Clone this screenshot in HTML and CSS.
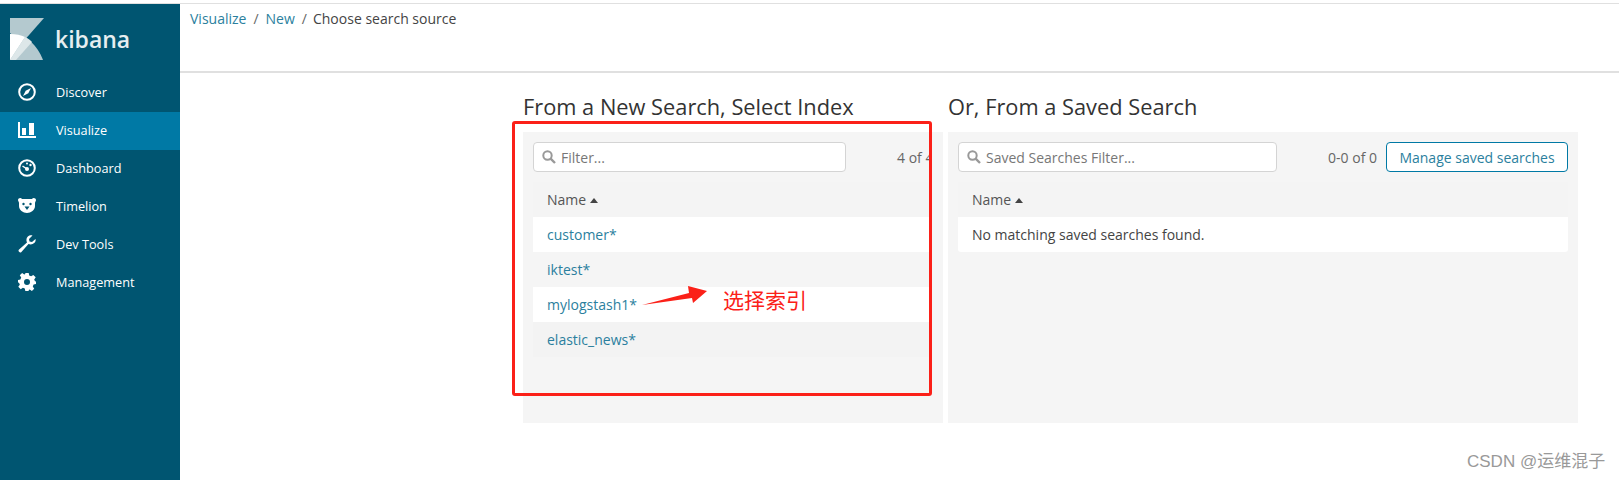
FILE: index.html
```html
<!DOCTYPE html>
<html>
<head>
    <title>Visualize - Kibana</title>
    <meta charset="utf-8">
    <link rel="stylesheet" href="styles.css">
</head>
<body>
    <div class="app">
        <nav class="sidebar">
            <div class="logo">
                <svg class="logo-mark" viewBox="0 0 34 42" width="34" height="42">
                    <polygon points="0,0 34,0 12,25 0,15" fill="#b4c9cf"/>
                    <path d="M0 16 C14 15 27 26 33 42 L0 42 Z" fill="#b4c9cf"/>
                    <path d="M0 16 C6 16 11 17 15 19 L0 42 Z" fill="#fff"/>
                    <path d="M15 19 C18 20 20 22 22 24 L6 42 L0 42 Z" fill="#dde7e9"/>
                </svg>
                <span class="logo-text">kibana</span>
            </div>
            <a class="nav-item" href="#">
                <svg class="nav-icon" viewBox="0 0 18 18"><circle cx="9" cy="9" r="7.8" fill="none" stroke="#fff" stroke-width="2"/><path d="M13 5 L10.3 10.3 L5 13 L7.7 7.7 Z" fill="#fff"/></svg>
                <span>Discover</span>
            </a>
            <a class="nav-item active" href="#">
                <svg class="nav-icon" viewBox="0 0 18 18"><path d="M0 1 H2 V15 H18 V17 H0 Z" fill="#fff"/><rect x="4" y="7" width="4" height="7" fill="#fff"/><rect x="11" y="2" width="5" height="12" fill="#fff"/></svg>
                <span>Visualize</span>
            </a>
            <a class="nav-item" href="#">
                <svg class="nav-icon" viewBox="0 0 18 18"><circle cx="9" cy="9" r="7.8" fill="none" stroke="#fff" stroke-width="2"/><circle cx="9" cy="10" r="2" fill="#fff"/><path d="M9 10 L4.5 7" stroke="#fff" stroke-width="1.5"/><circle cx="12.5" cy="6" r="1.2" fill="#fff"/><circle cx="9" cy="4.5" r="1" fill="#fff"/></svg>
                <span>Dashboard</span>
            </a>
            <a class="nav-item" href="#">
                <svg class="nav-icon" viewBox="0 0 18 18"><path d="M0 3 C0 1 3 0 4 2 H14 C15 0 18 1 18 3 C18 4 17 5 17 6 V9 C17 13 13 16 9 16 C5 16 1 13 1 9 V6 C1 5 0 4 0 3 Z" fill="#fff"/><circle cx="5.5" cy="7" r="1.2" fill="#005571"/><circle cx="12.5" cy="7" r="1.2" fill="#005571"/><path d="M6.5 9.5 H11.5 L9 13 Z" fill="#005571"/></svg>
                <span>Timelion</span>
            </a>
            <a class="nav-item" href="#">
                <svg class="nav-icon" viewBox="0 0 18 18"><path d="M17.5 4 L14 7 L11.5 6.5 L11 4 L14.5 0.6 C11.5 -0.4 8 2 8.5 6 L9 7.5 L0.8 14.8 C-0.3 16 1.8 18.2 3.2 17.2 L10.5 9 C14.5 10.5 18.5 7.5 17.5 4 Z" fill="#fff"/></svg>
                <span>Dev Tools</span>
            </a>
            <a class="nav-item" href="#">
                <svg class="nav-icon" viewBox="0 0 18 18"><path fill-rule="evenodd" d="M7.3 0 H10.7 L11.2 2.5 L13.1 3.3 L15.3 1.9 L17.7 4.3 L16.2 6.4 L17 8.3 L18 8.6 V11 L15.6 11.6 L14.8 13.5 L16.2 15.7 L13.9 18 L11.7 16.6 L10.7 17 V18 H7.3 L6.8 15.6 L4.9 14.8 L2.7 16.2 L0.3 13.8 L1.8 11.7 L1 9.8 L0 9.5 V7 L2.4 6.4 L3.2 4.5 L1.8 2.3 L4.1 0 L6.3 1.4 L7.3 1 Z M9 6 A3 3 0 1 0 9 12 A3 3 0 1 0 9 6 Z" fill="#fff"/></svg>
                <span>Management</span>
            </a>
        </nav>
        <div class="content">
            <div class="topbar">
                <a href="#">Visualize</a><span class="sep">/</span><a href="#">New</a><span class="sep">/</span><span class="current">Choose search source</span>
            </div>
            <div class="columns">
                <section class="col col-left">
                    <h3>From a New Search, Select Index</h3>
                    <div class="panel">
                        <div class="panel-clip">
                            <div class="toolbar">
                                <div class="filter filter-left">
                                    <svg class="search-icon" viewBox="0 0 14 14"><circle cx="5.5" cy="5.5" r="4.2" fill="none" stroke="#999" stroke-width="2"/><path d="M8.6 8.6 L13 13" stroke="#999" stroke-width="2.4"/></svg>
                                    <span>Filter...</span>
                                </div>
                                <span class="count">4 of 4</span>
                            </div>
                            <div class="th">Name <i class="caret"></i></div>
                            <a class="row white" href="#">customer*</a>
                            <a class="row" href="#">iktest*</a>
                            <a class="row white" href="#">mylogstash1*</a>
                            <a class="row shade" href="#">elastic_news*</a>
                        </div>
                    </div>
                </section>
                <section class="col col-right">
                    <h3>Or, From a Saved Search</h3>
                    <div class="panel panel-right">
                        <div class="toolbar">
                            <div class="filter filter-right">
                                <svg class="search-icon" viewBox="0 0 14 14"><circle cx="5.5" cy="5.5" r="4.2" fill="none" stroke="#999" stroke-width="2"/><path d="M8.6 8.6 L13 13" stroke="#999" stroke-width="2.4"/></svg>
                                <span>Saved Searches Filter...</span>
                            </div>
                            <span class="count count-right">0-0 of 0</span>
                            <button class="manage">Manage saved searches</button>
                        </div>
                        <div class="th">Name <i class="caret"></i></div>
                        <div class="row white empty">No matching saved searches found.</div>
                    </div>
                </section>
            </div>
        </div>
    </div>

    <!-- annotation pasted over the screenshot -->
    <div class="mark-box"></div>
    <svg class="mark-arrow" viewBox="0 0 66 22" width="66" height="22"><path d="M0 20 L47 8 L46 1 L65 6 L51 18 L50 13 Z" fill="#fb2018"/></svg>
    <div class="mark-text">选择索引</div>
    <div class="watermark">CSDN @运维混子</div>
</body>
</html>
```
FILE: styles.css
```css
body {
    margin: 0;
    padding-top: 3px;
    font-family: "Open Sans", "Noto Sans CJK SC", sans-serif;
    font-size: 14px;
    color: #444;
    background-color: white;
    overflow: hidden;
}
a {
    color: #2b7f9e;
    text-decoration: none;
}
.app {
    display: flex;
    height: 477px;
    border-top: 1px solid #e0e0e0;
    box-sizing: border-box;
}
.sidebar {
    width: 180px;
    flex-shrink: 0;
    background-color: #005571;
}
.logo {
    display: flex;
    align-items: center;
    height: 70px;
    padding-left: 10px;
    box-sizing: border-box;
}
.logo-text {
    margin-left: 11px;
    font-size: 23px;
    font-weight: 600;
    color: #e6eef0;
}
.nav-item {
    display: flex;
    align-items: center;
    height: 38px;
    padding: 0 0 2px 18px;
    box-sizing: border-box;
    font-size: 12.7px;
    color: white;
}
.nav-item.active {
    background-color: #0079a5;
}
.nav-icon {
    width: 18px;
    height: 18px;
    margin-right: 20px;
}
.content {
    flex: 1;
}
.topbar {
    height: 69px;
    padding: 5px 0 0 10px;
    box-sizing: border-box;
    border-bottom: 2px solid #e0e0e0;
    color: #444;
}
.sep {
    margin: 0 7px;
    color: #666;
}
.current {
    margin-left: -1px;
}
.columns {
    display: flex;
    margin-left: 343px;
    gap: 5px;
}
.col h3 {
    margin: 0;
    height: 59px;
    padding-top: 19px;
    box-sizing: border-box;
    font-size: 21.8px;
    font-weight: 400;
    color: #333;
}
.col-left {
    width: 420px;
}
.col-right {
    width: 630px;
}
.panel {
    height: 291px;
    background-color: #f5f5f5;
    padding: 10px 0 0 10px;
    box-sizing: border-box;
}
.panel-clip {
    width: 398px;
    overflow: hidden;
}
.panel-right {
    padding-right: 10px;
}
.toolbar {
    display: flex;
    align-items: center;
    height: 30px;
    white-space: nowrap;
}
.filter {
    display: flex;
    align-items: center;
    height: 30px;
    box-sizing: border-box;
    background-color: white;
    border: 1px solid #d4d4d4;
    border-radius: 4px;
    padding-left: 8px;
    color: #777;
}
.filter-left {
    width: 313px;
    flex-shrink: 0;
}
.filter-right {
    width: 319px;
    flex-shrink: 0;
}
.search-icon {
    width: 14px;
    height: 14px;
    margin-right: 5px;
}
.count {
    margin-left: 51px;
    color: #666;
}
.count-right {
    margin-left: auto;
}
.manage {
    margin-left: 9px;
    width: 182px;
    height: 30px;
    background-color: white;
    border: 1px solid #0079a5;
    border-radius: 4px;
    color: #2b7f9e;
    font-family: inherit;
    font-size: 14px;
    padding: 0;
}
.th {
    height: 35px;
    margin-top: 10px;
    padding: 8px 14px 0;
    box-sizing: border-box;
    background-color: #f4f4f4;
    color: #555;
}
.caret {
    display: inline-block;
    width: 0;
    height: 0;
    margin: 0 0 2px 0;
    border-left: 4px solid transparent;
    border-right: 4px solid transparent;
    border-bottom: 5px solid #444;
}
.row {
    display: block;
    height: 35px;
    line-height: 35px;
    padding-left: 14px;
    box-sizing: border-box;
}
.row.white {
    background-color: white;
}
.row.shade {
    background-color: #f3f3f3;
}
.row.empty {
    color: #444;
    border-radius: 0 0 3px 3px;
}
.mark-box {
    position: absolute;
    left: 512px;
    top: 121px;
    width: 420px;
    height: 275px;
    box-sizing: border-box;
    border: 3px solid #fb2018;
    border-radius: 3px;
}
.mark-arrow {
    position: absolute;
    left: 642px;
    top: 285px;
}
.mark-text {
    position: absolute;
    left: 723px;
    top: 285px;
    font-family: "Noto Sans CJK SC", sans-serif;
    font-size: 21px;
    line-height: 28px;
    color: #fb2018;
}
.watermark {
    position: absolute;
    left: 1467px;
    top: 447px;
    font-family: "Liberation Sans", "Noto Sans CJK SC", sans-serif;
    font-size: 17px;
    color: #999;
}
```
